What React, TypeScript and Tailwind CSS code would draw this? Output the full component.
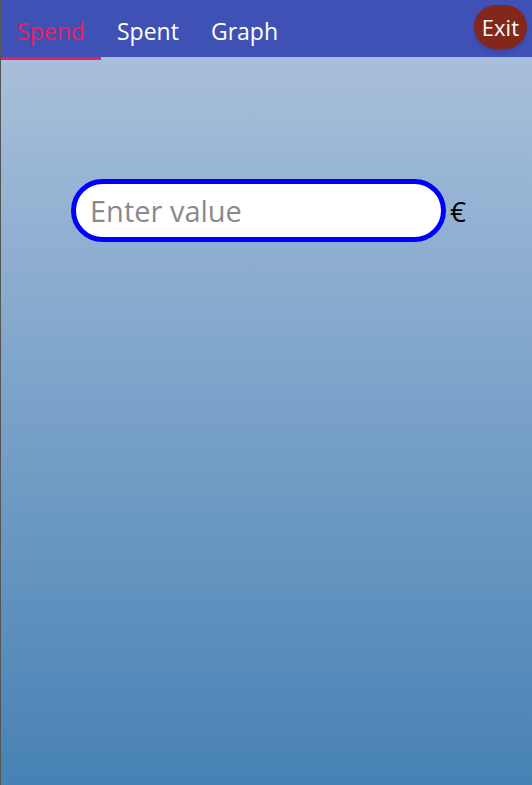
import React from 'react';

const tabs = ['Spend', 'Spent', 'Graph'];

export default function App() {
  return (
    <div
      className="w-[532px] h-[785px] flex flex-col border-l border-[#555555] bg-gradient-to-b from-[#b0c4de] to-[#4682b4]"
      style={{ fontFamily: '"Open Sans", "Noto Sans", sans-serif' }}
    >
      {/* Top tab bar */}
      <div className="h-[57px] bg-[#3f51b5] flex items-center shrink-0">
        <div className="flex h-full">
          {tabs.map((t, i) => (
            <div
              key={t}
              className={`relative h-full flex items-center justify-center pt-[5px] text-[23px] ${
                i === 0 ? 'w-[100px] text-[#e91e63]' : 'px-[16px] text-white'
              }`}
            >
              {t}
              {i === 0 && <div className="absolute left-0 right-0 top-[57px] h-[3px] bg-[#e91e63]" />}
            </div>
          ))}
        </div>
        <div className="ml-auto mr-[5px] mb-[3px] h-[44px] px-[8px] rounded-full bg-[#83261c] text-white text-[22px] flex items-center shadow-md">
          Exit
        </div>
      </div>

      {/* Content */}
      <div className="flex items-center pt-[122px] pl-[70px]">
        <input
          placeholder="Enter value"
          className="w-[375px] h-[63px] rounded-full border-[5px] border-[#0000ff] bg-white px-[14px] text-[29px] text-black placeholder:text-[#8a8a8a] outline-none"
        />
        <span className="ml-[4px] text-[28px] text-black">€</span>
      </div>
    </div>
  );
}
